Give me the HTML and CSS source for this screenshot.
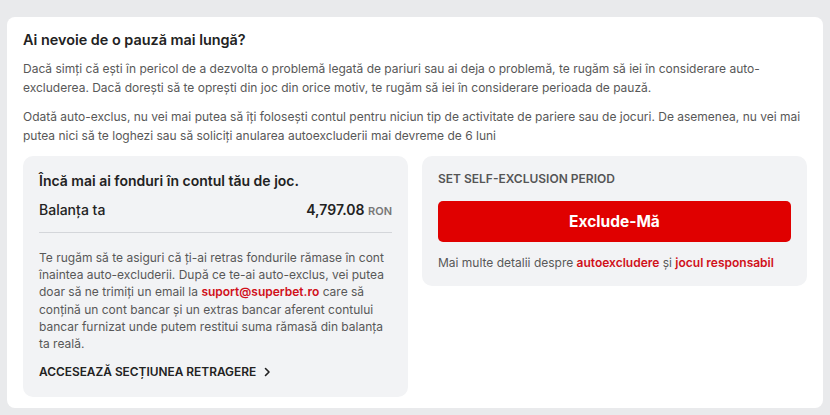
FILE: index.html
```html
<!DOCTYPE html>
<html lang="ro">
<head>
  <meta charset="UTF-8">
  <title>Autoexcludere</title>
  <link rel="stylesheet" href="styles.css">
</head>
<body>

  <div class="card">
    <h2 class="title">Ai nevoie de o pauză mai lungă?</h2>
    <p class="intro">Dacă simți că ești în pericol de a dezvolta o problemă legată de pariuri sau ai deja o problemă, te rugăm să iei în considerare auto-excluderea. Dacă dorești să te oprești din joc din orice motiv, te rugăm să iei în considerare perioada de pauză.</p>
    <p class="intro">Odată auto-exclus, nu vei mai putea să îți folosești contul pentru niciun tip de activitate de pariere sau de jocuri. De asemenea, nu vei mai putea nici să te loghezi sau să soliciți anularea autoexcluderii mai devreme de 6 luni</p>

    <div class="panels">
      <div class="panel">
        <h3 class="panel-title">Încă mai ai fonduri în contul tău de joc.</h3>
        <div class="balance">
          <span>Balanța ta</span>
          <span class="amount">4,797.08 <small>RON</small></span>
        </div>
        <p class="note">Te rugăm să te asiguri că ți-ai retras fondurile rămase în cont înaintea auto-excluderii. După ce te-ai auto-exclus, vei putea doar să ne trimiți un email la <a href="#">suport@superbet.ro</a> care să conțină un cont bancar și un extras bancar aferent contului bancar furnizat unde putem restitui suma rămasă din balanța ta reală.</p>
        <a class="withdraw" href="#">ACCESEAZĂ SECȚIUNEA RETRAGERE
          <svg width="12" height="12" viewBox="0 0 12 12"><path d="M4.5 2.5 8 6l-3.5 3.5" fill="none" stroke="#222" stroke-width="1.6" stroke-linecap="round" stroke-linejoin="round"/></svg>
        </a>
      </div>

      <div class="panel">
        <div class="label">SET SELF-EXCLUSION PERIOD</div>
        <button class="exclude">Exclude-Mă</button>
        <p class="more">Mai multe detalii despre <a href="#">autoexcludere</a> și <a href="#">jocul responsabil</a></p>
      </div>
    </div>
  </div>

</body>
</html>
```

FILE: styles.css
```css
body {
  margin: 0;
  padding: 17px 7px 0;
  background-color: #e9eaec;
  font-family: Inter, "Noto Sans", sans-serif;
  color: #585858;
}

.card {
  background: white;
  border-radius: 8px;
  padding: 13px 16px 11px;
}

.title {
  margin: 0 0 9px;
  font-size: 14.4px;
  line-height: 20px;
  font-weight: 600;
  color: #222;
}

.intro {
  margin: 0 -7px 10px 0;
  font-size: 12px;
  line-height: 19px;
}

.panels {
  display: grid;
  grid-template-columns: 1fr 1fr;
  gap: 14px;
  align-items: start;
  margin-top: 11px;
}

.panel {
  background: #f2f3f5;
  border-radius: 10px;
  padding: 15px 16px;
}

.panel-title {
  margin: 0 0 9px;
  font-size: 14px;
  line-height: 20px;
  font-weight: 600;
  color: #222;
}

.balance {
  display: flex;
  justify-content: space-between;
  align-items: baseline;
  font-size: 14px;
  line-height: 20px;
  font-weight: 500;
  color: #222;
  padding-bottom: 11px;
  border-bottom: 1px solid #d4d6da;
}

.amount {
  font-weight: 600;
}

.amount small {
  font-size: 11px;
  font-weight: 600;
  color: #777;
}

.note {
  margin: 16px 0 10px;
  font-size: 12px;
  line-height: 17.2px;
}

a {
  color: #d0101a;
  font-weight: 600;
  text-decoration: none;
}

.withdraw {
  display: flex;
  align-items: center;
  gap: 5px;
  font-size: 11.9px;
  line-height: 20px;
  color: #222;
}

.label {
  font-size: 12px;
  line-height: 16px;
  font-weight: 600;
  color: #555;
}

.exclude {
  display: block;
  width: 100%;
  height: 41px;
  margin: 14px 0 12px;
  border: none;
  border-radius: 5px;
  background: #e00000;
  color: white;
  font-family: inherit;
  font-size: 15.5px;
  font-weight: 700;
}

.more {
  margin: 0;
  font-size: 12px;
  line-height: 17px;
}
```
